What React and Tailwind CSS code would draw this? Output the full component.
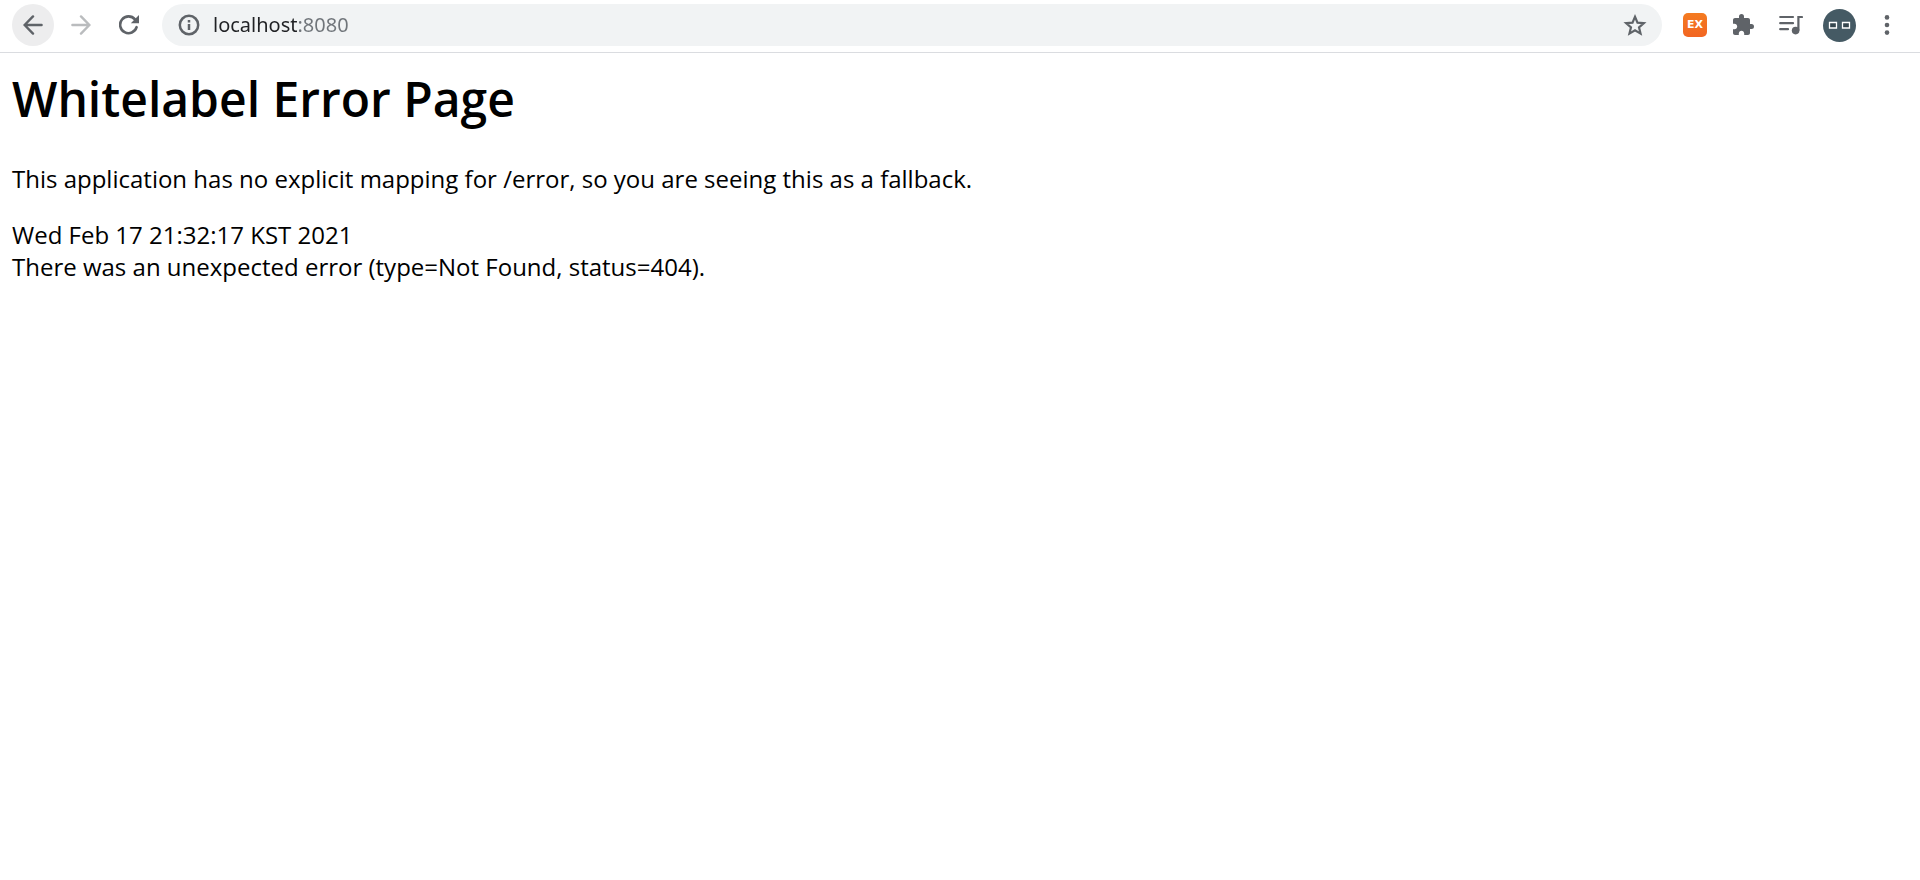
import React from "react";
import { MdExtension } from "react-icons/md";

function BackIcon() {
  return (
    <svg viewBox="0 0 20 20" className="w-5 h-5" fill="none" stroke="currentColor" strokeWidth="2.4" strokeLinecap="round">
      <path d="M18.6 10H2M10 1.4L1.6 10l8.4 8.6" />
    </svg>
  );
}

function ForwardIcon() {
  return (
    <svg viewBox="0 0 20 20" className="w-5 h-5" fill="none" stroke="currentColor" strokeWidth="2.4" strokeLinecap="round">
      <path d="M1.4 10H18M10 1.4l8.4 8.6-8.4 8.6" />
    </svg>
  );
}

function ReloadIcon() {
  return (
    <svg viewBox="0 0 20 20" className="w-5 h-5">
      <path d="M17.6 12.2A8.4 8.4 0 1 1 16 4.4" fill="none" stroke="currentColor" strokeWidth="2.6" strokeLinecap="round" />
      <path d="M20 0v8.2h-8.2z" fill="currentColor" />
    </svg>
  );
}

function InfoIcon() {
  return (
    <svg viewBox="0 0 24 24" className="w-6 h-6" fill="none" stroke="currentColor" strokeWidth="2.5">
      <circle cx="12" cy="12" r="9.2" />
      <path d="M12 11v6M12 7v2.4" />
    </svg>
  );
}

function StarIcon() {
  return (
    <svg viewBox="0 0 24 24" className="w-[26px] h-[26px]" fill="none" stroke="currentColor" strokeWidth="2">
      <path d="M12 4.400l2.300 5.400 5.900.5-4.500 3.900 1.400 5.700-5.100-3.100-5.100 3.100 1.400-5.700-4.500-3.900 5.900-.5z" />
    </svg>
  );
}

function QueueIcon() {
  return (
    <svg viewBox="0 0 24 20" className="w-6 h-5" fill="none" stroke="currentColor" strokeWidth="2.2" strokeLinecap="round">
      <path d="M1.2 2H14M1.2 8.2H14M1.2 14.2H9" />
      <path d="M19.4 15V2H23" />
      <circle cx="16.6" cy="15.6" r="3.8" fill="currentColor" stroke="none" />
    </svg>
  );
}

function MenuIcon() {
  return (
    <svg viewBox="0 0 20 20" className="w-5 h-5" fill="currentColor">
      <circle cx="10" cy="2.4" r="2.3" />
      <circle cx="10" cy="10" r="2.3" />
      <circle cx="10" cy="17.6" r="2.3" />
    </svg>
  );
}

function Toolbar() {
  return (
    <header className="flex items-center h-[53px] pt-1 pb-1.5 pl-3 pr-[9px] border-b border-[#dadce0] text-[#5f6368]">
      <nav className="flex items-center gap-1.5">
        <button aria-label="Back" className="flex items-center justify-center w-[42px] h-[42px] rounded-full bg-[#ededee]">
          <BackIcon />
        </button>
        <button aria-label="Forward" className="flex items-center justify-center w-[42px] h-[42px] rounded-full text-[#babcbe]">
          <ForwardIcon />
        </button>
        <button aria-label="Reload" className="flex items-center justify-center w-[42px] h-[42px] rounded-full">
          <ReloadIcon />
        </button>
      </nav>

      <div className="flex flex-1 items-center h-[42px] ml-3 mr-[9px] pl-[15px] pr-3.5 rounded-full bg-[#f1f3f4]">
        <button aria-label="View site information">
          <InfoIcon />
        </button>
        {/* host is dark, port is grey */}
        <input
          type="text"
          aria-label="Address"
          defaultValue="localhost:8080"
          className="flex-1 min-w-0 ml-3 outline-none font-['Noto_Sans',sans-serif] text-xl text-transparent bg-clip-text bg-linear-to-r from-[#202124] from-[84px] to-[#70757a] to-[84px]"
        />
        <button aria-label="Bookmark this tab">
          <StarIcon />
        </button>
      </div>

      <div className="flex items-center">
        <button aria-label="EX extension" className="flex items-center justify-center w-12 h-[42px]">
          <span className="flex items-center justify-center w-6 h-6 rounded-[5px] bg-linear-to-b from-[#f47b20] to-[#f26522] font-['DejaVu_Sans',sans-serif] text-[11px] font-bold text-white">
            EX
          </span>
        </button>
        <button aria-label="Extensions" className="flex items-center justify-center w-12 h-[42px]">
          <MdExtension className="w-6 h-6" />
        </button>
        <button aria-label="Media controls" className="flex items-center justify-center w-12 h-[42px]">
          <QueueIcon />
        </button>
        <button aria-label="Profile" className="flex items-center justify-center w-12 h-[42px]">
          <svg viewBox="0 0 33 33" className="w-[33px] h-[33px]">
            <circle cx="16.5" cy="16.5" r="16.5" fill="#455a64" />
            <path d="M6.5 13.5h7V19h-7zM19.5 13.5h7V19h-7z" fill="#37474f" stroke="#fff" strokeWidth="1.3" />
          </svg>
        </button>
        <button aria-label="Menu" className="flex items-center justify-center w-12 h-[42px]">
          <MenuIcon />
        </button>
      </div>
    </header>
  );
}

export default function App() {
  return (
    <div className="min-h-screen bg-white">
      <Toolbar />
      <main className="px-3 pt-[22px] font-['Open_Sans','Noto_Sans',sans-serif] text-2xl text-black">
        <h1 className="text-5xl font-semibold">Whitelabel Error Page</h1>
        <p className="mt-10">This application has no explicit mapping for /error, so you are seeing this as a fallback.</p>
        <div className="mt-6">Wed Feb 17 21:32:17 KST 2021</div>
        <div>There was an unexpected error (type=Not Found, status=404).</div>
      </main>
    </div>
  );
}
